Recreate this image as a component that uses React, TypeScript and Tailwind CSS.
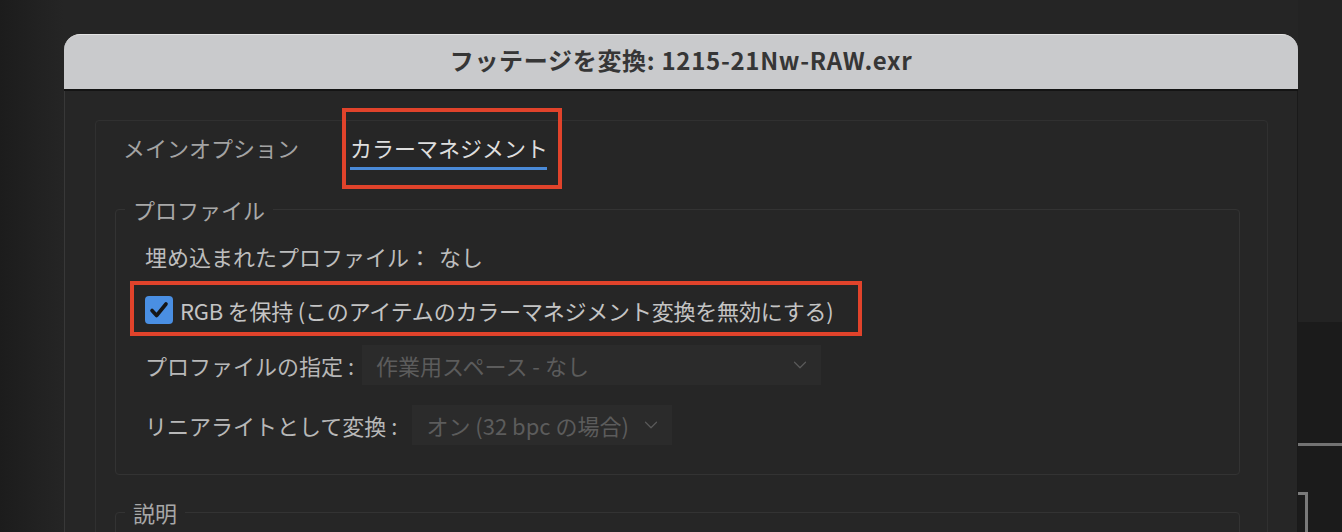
import React from 'react';
import { ChevronDown } from 'lucide-react';

const font = "font-['Noto_Sans_CJK_JP','Noto_Sans',sans-serif]";

const Select: React.FC<{ label: string; width: string }> = ({ label, width }) => (
  <div className={`${width} h-[40px] bg-[#2b2b2b] flex items-center justify-between pl-[14px] pr-[10px]`}>
    <span className="text-[#5c5c5c] text-[22px] leading-[28px]">{label}</span>
    <ChevronDown size={22} strokeWidth={1.3} className="text-[#5a5a5a]" />
  </div>
);

export default function App() {
  return (
    <div className={`${font} flex h-[532px] w-[1342px] overflow-hidden bg-[#252525]`}>
      <div className="w-[64px] shrink-0 bg-gradient-to-r from-[#1c1c1c] to-[#252525]" />

      <div className="w-[1234px] shrink-0 pt-[34px] flex flex-col">
        <div className="h-[57px] shrink-0 rounded-t-[16px] bg-[#c9cacc] border-t border-[#e4e4e4] border-b-2 border-b-[#141414] flex items-center justify-center pb-[4px]">
          <span className="text-[#363636] text-[24px] tracking-[0.7px] font-bold leading-[30px]">フッテージを変換: 1215-21Nw-RAW.exr</span>
        </div>

        <div className="flex-1 bg-[#262626] border-l border-l-[#383838] border-r border-r-[#1a1a1a] pt-[29px] pl-[30px] pr-[29px]">
          <div className="h-[420px] border border-[#303030] rounded-[4px]">
            <div className="flex pt-[12px] pl-[27px]">
              <div className="w-[227px] h-[36px] text-[22px] leading-[28px] text-[#a3a3a3]">メインオプション</div>
              <div className="relative">
                <div className="text-[22px] leading-[28px] text-[#dedede]">カラーマネジメント</div>
                <div className="mt-[6px] h-[3px] w-[197px] bg-[#4a8ad8]" />
                <div className="absolute left-[-8px] top-[-25px] w-[220px] h-[81px] border-4 border-[#e1432b]" />
              </div>
            </div>

            <fieldset className="mt-[25px] ml-[19px] mr-[27px] border border-[#333333] rounded-[4px] px-[29px] pb-[29px]">
              <legend className="ml-[-20px] px-[8px] text-[22px] leading-[28px] text-[#a8a8a8]">プロファイル</legend>
              <div className="mt-[13px] h-[40px] flex items-center text-[22px] leading-[28px] text-[#bdbdbd]">
                <span>埋め込まれたプロファイル：</span>
                <span className="ml-[8px]">なし</span>
              </div>

              <div className="relative mt-[14px] h-[40px] flex items-center gap-[7px]">
                <div className="w-[28px] h-[28px] rounded-[4px] bg-[#4a8fe3] flex items-center justify-center">
                  <svg width="22" height="22" viewBox="0 0 22 22" fill="none">
                    <path d="M4 11.5l4.6 5L18 5" stroke="#161616" strokeWidth="3.6" strokeLinecap="round" strokeLinejoin="round" />
                  </svg>
                </div>
                <span className="text-[22px] leading-[28px] text-[#c4c4c4] tracking-[-0.2px]">RGB を保持 (このアイテムのカラーマネジメント変換を無効にする)</span>
                <div className="absolute left-[-15px] top-[-9px] w-[732px] h-[55px] border-4 border-[#e1432b]" />
              </div>

              <div className="mt-[15px] flex items-center">
                <span className="text-[22px] leading-[28px] text-[#b8b8b8]">プロファイルの指定 :</span>
                <div className="ml-[8px]">
                  <Select label="作業用スペース - なし" width="w-[459px]" />
                </div>
              </div>

              <div className="mt-[20px] flex items-center">
                <span className="text-[22px] leading-[28px] text-[#b8b8b8]">リニアライトとして変換 :</span>
                <div className="ml-[15px]">
                  <Select label="オン (32 bpc の場合)" width="w-[260px]" />
                </div>
              </div>
            </fieldset>

            <fieldset className="mt-[23px] ml-[19px] mr-[27px] h-[60px] border border-[#333333] rounded-[4px] px-[29px]">
              <legend className="ml-[-20px] px-[8px] text-[22px] leading-[28px] text-[#a8a8a8]">説明</legend>
            </fieldset>
          </div>
        </div>
      </div>

      <div className="w-[44px] shrink-0 flex flex-col">
        <div className="h-[330px] bg-[#232323]" />
        <div className="flex-1 bg-[#1b1b1b] pt-[121px]">
          <div className="h-[3px] bg-[#737373]" />
          <div className="mt-[46px] w-[10px] h-[40px] border-t-[3px] border-r-[3px] border-[#7a7a7a]" />
        </div>
      </div>
    </div>
  );
}
